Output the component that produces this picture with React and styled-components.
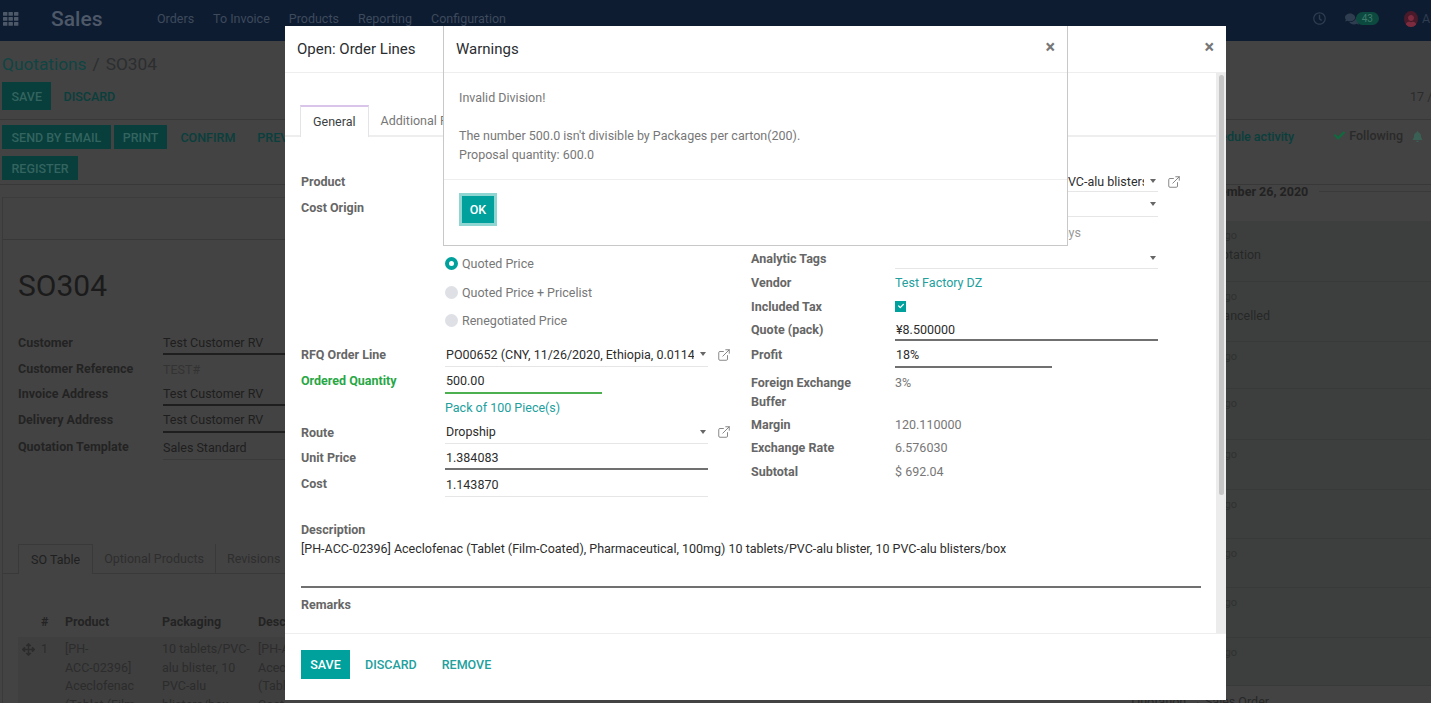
import React from 'react';
import styled, { createGlobalStyle } from 'styled-components';
import { ExternalLink } from 'lucide-react';
import { FaBell, FaCheck, FaComments, FaArrowsAlt, FaRegClock, FaUser } from 'react-icons/fa';

const GlobalStyle = createGlobalStyle`
  html, body {
    margin: 0;
    padding: 0;
    background: #434343;
  }
  * {
    box-sizing: border-box;
  }
`;

const Page = styled.div`
  position: relative;
  width: 1431px;
  height: 703px;
  overflow: hidden;
  background: #434343;
  color: #232323;
  font-family: Roboto, "Liberation Sans", sans-serif;
  font-size: 12.5px;
`;

/* ---- dimmed page behind the dialogs ---- */

const Navbar = styled.header`
  display: flex;
  align-items: center;
  height: 41px;
  padding: 0 0 4px 3px;
  background: #0e1c31;
  color: #3d4a5c;
`;

const AppsIcon = styled.svg`
  width: 16px;
  height: 14px;
  fill: #4d5868;
`;

const Brand = styled.div`
  margin-left: 32px;
  width: 106px;
  font-size: 21px;
  font-weight: 500;
  color: #4d5868;
`;

const NavMenu = styled.nav`
  display: flex;
  gap: 19px;
  flex: 1;
`;

const NavTools = styled.div`
  display: flex;
  align-items: center;
  color: #2f3d50;
`;

const ClockIcon = styled(FaRegClock)`
  margin-right: 19px;
`;

const Badge = styled.span`
  margin-left: -3px;
  margin-right: 25px;
  padding: 1px 6px;
  border-radius: 9px;
  background: #0c4a3f;
  color: #3f7a6c;
  font-size: 10px;
`;

const Avatar = styled.span`
  display: flex;
  align-items: flex-end;
  justify-content: center;
  width: 14px;
  height: 16px;
  overflow: hidden;
  border-radius: 50%;
  background: #4a1a2a;
  color: #7c2c3e;
  font-size: 12px;
`;

const UserInitial = styled.span`
  width: 9px;
  margin-left: 4px;
`;

const ControlPanel = styled.div`
  height: 79px;
  padding: 0 2px;
  border-bottom: 1px solid #383838;
`;

const Breadcrumb = styled.div`
  height: 41px;
  padding-top: 13px;
  font-size: 17.3px;
  color: #2c2e30;
`;

const CrumbLink = styled.span`
  color: #0f4543;
`;

const CrumbSeparator = styled.span`
  margin: 0 6px;
`;

const PanelRow = styled.div`
  display: flex;
  align-items: center;
  justify-content: space-between;
  gap: 13px;
`;

const DimGroup = styled.div`
  display: flex;
  align-items: center;
  align-content: flex-start;
  flex-wrap: ${(p) => (p.$wrap ? 'wrap' : 'nowrap')};
  gap: 7px ${(p) => p.$gap || 3}px;
  width: ${(p) => (p.$width ? `${p.$width}px` : 'auto')};
`;

const DimButton = styled.div`
  display: flex;
  align-items: center;
  height: ${(p) => p.$h || 24}px;
  padding: 0 ${(p) => p.$pad || 9.5}px;
  background: #083e3b;
  color: #336460;
  font-weight: 500;
  white-space: nowrap;
`;

const DimLink = styled.div`
  margin-left: ${(p) => p.$left || 0}px;
  color: #093f3d;
  font-weight: 500;
  white-space: nowrap;
`;

const Pager = styled.div`
  margin-left: auto;
  margin-right: -1px;
  width: 20px;
  color: #2b2b2b;
  white-space: nowrap;
`;

const StatusBar = styled.div`
  display: flex;
  justify-content: space-between;
  height: 65px;
  padding: 5px 8px 0 2px;
  border-bottom: 1px solid #383838;
`;

const ChatterBar = styled.div`
  display: flex;
  align-items: center;
  height: 22px;
  font-weight: 500;
  color: #2a2a2a;
`;

const ActivityLink = styled.span`
  color: #093f3d;
`;

const Following = styled.span`
  display: flex;
  align-items: center;
  gap: 4px;
  margin: -2px 0 0 40px;
  svg {
    color: #0e6b3f;
  }
`;

const BellIcon = styled(FaBell)`
  margin-left: 9px;
  color: #3a5f55;
`;

const Main = styled.div`
  display: flex;
`;

const Sheet = styled.section`
  flex: 1;
  min-width: 0;
  margin: 12px 0 0 2px;
  border-left: 1px solid #3a3a3a;
`;

const SheetHead = styled.div`
  height: 43px;
  border-top: 1px solid #3c3c3c;
  border-bottom: 1px solid #383838;
`;

const SheetBody = styled.div`
  padding: 0 0 0 15px;
`;

const DocTitle = styled.h1`
  margin: 0;
  height: 90px;
  padding-top: 28px;
  font-size: 30px;
  font-weight: 400;
  line-height: 36px;
  color: #1b1b1b;
`;

const DimRow = styled.div`
  display: grid;
  grid-template-columns: 145px 1fr;
  align-items: center;
  height: ${(p) => p.$h}px;
`;

const DimLabel = styled.div`
  font-weight: 700;
  color: #232323;
  white-space: nowrap;
`;

const DimValue = styled.div`
  height: 100%;
  display: flex;
  align-items: center;
  padding-top: 2px;
  border-bottom: ${(p) => (p.$line ? `${p.$line === 2 ? 2 : 1}px solid ${p.$line === 2 ? '#1e1e1e' : '#3a3a3a'}` : 'none')};
  color: ${(p) => (p.$muted ? '#333' : '#1e1e1e')};
  white-space: nowrap;
`;

const DimTabs = styled.div`
  display: flex;
  height: 30px;
  margin: 84px 0 0 -15px;
  padding-left: 15px;
  border-bottom: 1px solid #393939;
`;

const DimTab = styled.div`
  display: flex;
  align-items: center;
  height: ${(p) => (p.$active ? 30 : 29)}px;
  padding: 0 ${(p) => (p.$active ? 12 : 11)}px;
  border: 1px solid #393939;
  border-width: ${(p) => (p.$active ? '1px 1px 0' : '0 1px 0 0')};
  background: #434343;
  color: ${(p) => (p.$active ? '#1f1f1f' : '#2e2e2e')};
  white-space: nowrap;
`;

const Table = styled.div`
  width: 267px;
  margin-top: 39px;
  overflow: hidden;
`;

const TableRow = styled.div`
  display: grid;
  grid-template-columns: 23px 24px 97px 96px 27px;
  align-items: start;
  background: ${(p) => (p.$head ? 'transparent' : '#3f3f3f')};
  line-height: 18.5px;
  height: ${(p) => (p.$head ? '24px' : 'auto')};
  padding-top: ${(p) => (p.$head ? 0 : 3)}px;
  font-weight: ${(p) => (p.$head ? 700 : 400)};
  color: ${(p) => (p.$head ? '#232323' : '#2c2c2c')};
`;

const ClippedCell = styled.span`
  overflow: hidden;
  white-space: nowrap;
`;

const MoveIcon = styled(FaArrowsAlt)`
  margin: 3px 0 0 4px;
`;

const Chatter = styled.aside`
  width: 251px;
  flex-shrink: 0;
`;

const DateLine = styled.div`
  display: flex;
  align-items: center;
  gap: 11px;
  height: 36px;
  padding: 0 0 24px 18px;
  font-weight: 700;
  color: #222;
  white-space: nowrap;
  &::after {
    content: '';
    flex: 1;
    border-top: 1px solid #3a3a3a;
  }
`;

const ChatRow = styled.div`
  height: ${(p) => p.$h}px;
  padding-top: 8px;
  background: #3d3f3e;
  border-bottom: 1px solid #383a39;
`;

const Ago = styled.div`
  width: 57px;
  text-align: right;
  font-size: 11px;
  line-height: 14px;
  color: #2f3130;
  white-space: nowrap;
`;

const ChatText = styled.div`
  display: flex;
  justify-content: flex-end;
  margin-top: ${(p) => p.$top || 3}px;
  width: ${(p) => p.$end}px;
  line-height: 18px;
  color: #262827;
  white-space: nowrap;
`;

/* ---- dialogs ---- */

const Dialog = styled.div`
  position: absolute;
  top: 26px;
  left: ${(p) => p.$left}px;
  width: ${(p) => p.$width}px;
  height: ${(p) => p.$height}px;
  display: flex;
  flex-direction: column;
  background: #fff;
  border: ${(p) => (p.$bordered ? '1px solid #c8c8c8' : 'none')};
  border-top: none;
`;

const DialogHead = styled.div`
  display: flex;
  align-items: center;
  justify-content: space-between;
  flex-shrink: 0;
  height: 47px;
  padding: 0 ${(p) => p.$right}px 0 ${(p) => p.$left}px;
  border-bottom: 1px solid #eeeeee;
`;

const DialogTitle = styled.div`
  font-size: ${(p) => p.$size}px;
  color: #2a2d30;
`;

const CloseMark = styled.span`
  font-size: 18px;
  font-weight: 700;
  line-height: 18px;
  color: #777;
  margin-top: -5px;
`;

const DialogMiddle = styled.div`
  flex: 1;
  min-height: 0;
  display: flex;
  overflow: hidden;
`;

const DialogContent = styled.div`
  flex: 1;
  min-width: 0;
  padding-top: 32px;
`;

const ScrollTrack = styled.div`
  width: 10px;
  flex-shrink: 0;
  padding: 2px 2px 0 3px;
  background: #ececec;
`;

const ScrollThumb = styled.div`
  height: 420px;
  background: #c6c6c6;
  border-radius: 3px;
`;

const TabStrip = styled.div`
  display: flex;
  height: 32px;
  padding-left: 15px;
  border-bottom: 2px solid #eeeeee;
`;

const FormTab = styled.div`
  display: flex;
  align-items: center;
  height: ${(p) => (p.$active ? 32 : 30)}px;
  padding: 0 12px ${(p) => (p.$active ? 2 : 0)}px;
  border: ${(p) => (p.$active ? '1px solid #e3e3e8' : 'none')};
  border-top: ${(p) => (p.$active ? '2px solid #d9c4ea' : 'none')};
  border-bottom: none;
  background: #fff;
  color: ${(p) => (p.$active ? '#3c3f42' : '#777')};
  white-space: nowrap;
`;

const FormGrid = styled.div`
  display: grid;
  grid-template-columns: 450px 1fr;
  margin-top: 31px;
  padding: 0 15px 0 16px;
`;

const FormColumn = styled.div`
  display: flex;
  flex-direction: column;
  min-width: 0;
`;

const FormRow = styled.div`
  display: grid;
  grid-template-columns: 144px 1fr;
  align-items: center;
  height: ${(p) => p.$h}px;
`;

const FieldLabel = styled.div`
  font-weight: 700;
  color: ${(p) => (p.$accent ? '#28a745' : '#666666')};
  line-height: 19px;
`;

const StackedLabel = styled(FieldLabel)`
  align-self: start;
  padding-top: 5px;
`;

const FieldValue = styled.div`
  display: flex;
  align-items: center;
  height: 100%;
  color: #777;
`;

const StackedValue = styled(FieldValue)`
  align-items: flex-start;
  padding-top: 5px;
  line-height: 19px;
`;

const FieldWrap = styled.div`
  display: flex;
  align-items: center;
  gap: 9px;
  height: 100%;
`;

const InputBox = styled.div`
  display: flex;
  align-items: center;
  justify-content: space-between;
  width: ${(p) => p.$w || 263}px;
  height: 100%;
  padding: ${(p) => p.$push || (p.$select ? 0 : 2)}px ${(p) => (p.$select ? 0 : 1)}px 0 1px;
  border-bottom: ${(p) => (p.$line === 'dark' ? '2px solid #707070' : p.$line === 'green' ? '2px solid #4caf50' : '1px solid #e6e6e6')};
  color: #2d2d2d;
  white-space: nowrap;
  overflow: hidden;
`;

const InputText = styled.span`
  flex: 1;
  min-width: 0;
  overflow: hidden;
  text-overflow: clip;
`;

const Caret = styled.span`
  flex-shrink: 0;
  width: 0;
  height: 0;
  margin-left: 6px;
  margin-right: 2px;
  border-top: 4px solid #666;
  border-left: 3px solid transparent;
  border-right: 3px solid transparent;
`;

const RadioLine = styled.label`
  display: flex;
  align-items: center;
  gap: 4px;
  color: #777;
`;

const RadioDot = styled.span`
  display: block;
  width: 13px;
  height: 13px;
  border-radius: 50%;
  background: ${(p) => (p.$on ? '#fff' : '#dee0e5')};
  border: ${(p) => (p.$on ? '4px solid #00a09d' : 'none')};
`;

const CheckBox = styled.span`
  display: flex;
  align-items: center;
  justify-content: center;
  width: 11px;
  height: 11px;
  background: #00a09d;
  color: #fff;
  font-size: 6px;
`;

const TealText = styled.span`
  color: #21a09d;
`;

const HiddenEnd = styled.div`
  width: ${(p) => p.$end}px;
  text-align: right;
  color: #999;
  white-space: nowrap;
`;

const NoteBlock = styled.div`
  margin: 23px 15px 0 16px;
`;

const NoteValue = styled.div`
  height: 49px;
  padding-top: 1px;
  line-height: 18px;
  border-bottom: 2px solid #707070;
  color: #2d2d2d;
  white-space: nowrap;
`;

const NoteLabel = styled(FieldLabel)`
  height: 19px;
`;

const RemarksLabel = styled(FieldLabel)`
  margin-top: 7px;
`;

const DialogFoot = styled.div`
  display: flex;
  align-items: flex-start;
  gap: 15px;
  flex-shrink: 0;
  height: 67px;
  padding: 16px 0 0 16px;
  border-top: 1px solid #eeeeee;
`;

const PrimaryButton = styled.button`
  width: 49px;
  height: 29px;
  padding: 0;
  border: none;
  background: #00a09d;
  color: #fff;
  font: 500 12.5px Roboto, "Liberation Sans", sans-serif;
`;

const TextButton = styled.button`
  height: 29px;
  padding: 0;
  border: none;
  background: none;
  color: #21a09d;
  font: 500 12.5px Roboto, "Liberation Sans", sans-serif;
  & + & {
    margin-left: 10px;
  }
`;

const WarningBody = styled.div`
  padding: 15px 15px 15px;
  line-height: 19px;
  color: #777;
  border-bottom: 1px solid #eeeeee;
`;

const BlankLine = styled.div`
  height: 19px;
`;

const WarningFoot = styled.div`
  padding: 13px 15px;
`;

const OkButton = styled.button`
  display: block;
  width: 38px;
  height: 33px;
  padding: 0;
  border: 3px solid #8fd6d3;
  background: #00a09d;
  color: #fff;
  font: 500 12.5px Roboto, "Liberation Sans", sans-serif;
`;

const ExtIcon = styled(ExternalLink)`
  flex-shrink: 0;
  margin-top: ${(p) => p.$push || 0}px;
  color: #777;
`;

const navItems = ['Orders', 'To Invoice', 'Products', 'Reporting', 'Configuration'];

const chatRows = [
  { h: 61, text: 'Quotation', end: 81 },
  { h: 60, text: 'Order Cancelled', end: 90 },
  { h: 47 },
  { h: 51 },
  { h: 50 },
  { h: 49 },
  { h: 49 },
  { h: 50 },
  { h: 48 },
];

const Apps = () => (
  <AppsIcon viewBox="0 0 16 14">
    {[0, 5.5, 11].map((x) =>
      [0, 5, 10].map((y) => <rect key={`${x}-${y}`} x={x} y={y} width="4.4" height="3.8" rx="0.6" />)
    )}
  </AppsIcon>
);

const BackgroundPage = () => (
  <>
    <Navbar>
      <Apps />
      <Brand>Sales</Brand>
      <NavMenu>
        {navItems.map((item) => (
          <span key={item}>{item}</span>
        ))}
      </NavMenu>
      <NavTools>
        <ClockIcon size={13} />
        <FaComments size={14} />
        <Badge>43</Badge>
        <Avatar>
          <FaUser />
        </Avatar>
        <UserInitial>A</UserInitial>
      </NavTools>
    </Navbar>

    <ControlPanel>
      <Breadcrumb>
        <CrumbLink>Quotations</CrumbLink>
        <CrumbSeparator>/</CrumbSeparator>
        SO304
      </Breadcrumb>
      <PanelRow>
        <DimGroup $gap={12}>
          <DimButton $h={28}>SAVE</DimButton>
          <DimLink>DISCARD</DimLink>
        </DimGroup>
        <Pager>17 /</Pager>
      </PanelRow>
    </ControlPanel>

    <StatusBar>
      <DimGroup $wrap $width={330}>
        <DimButton>SEND BY EMAIL</DimButton>
        <DimButton $pad={9}>PRINT</DimButton>
        <DimLink $left={10}>CONFIRM</DimLink>
        <DimLink $left={19}>PREVIEW</DimLink>
        <DimButton>REGISTER</DimButton>
      </DimGroup>
      <ChatterBar>
        <ActivityLink>Schedule activity</ActivityLink>
        <Following>
          <FaCheck size={11} /> Following
        </Following>
        <BellIcon size={11} />
      </ChatterBar>
    </StatusBar>

    <Main>
      <Sheet>
        <SheetHead />
        <SheetBody>
          <DocTitle>SO304</DocTitle>
          <DimRow $h={25}>
            <DimLabel>Customer</DimLabel>
            <DimValue $line={2}>Test Customer RV</DimValue>
          </DimRow>
          <DimRow $h={26}>
            <DimLabel>Customer Reference</DimLabel>
            <DimValue $muted>TEST#</DimValue>
          </DimRow>
          <DimRow $h={25}>
            <DimLabel>Invoice Address</DimLabel>
            <DimValue $line={2}>Test Customer RV</DimValue>
          </DimRow>
          <DimRow $h={27}>
            <DimLabel>Delivery Address</DimLabel>
            <DimValue $line={2}>Test Customer RV</DimValue>
          </DimRow>
          <DimRow $h={27}>
            <DimLabel>Quotation Template</DimLabel>
            <DimValue $line={1}>Sales Standard</DimValue>
          </DimRow>
          <DimTabs>
            <DimTab $active>SO Table</DimTab>
            <DimTab>Optional Products</DimTab>
            <DimTab>Revisions</DimTab>
          </DimTabs>
          <Table>
            <TableRow $head>
              <span />
              <span>#</span>
              <span>Product</span>
              <span>Packaging</span>
              <ClippedCell>Description</ClippedCell>
            </TableRow>
            <TableRow>
              <MoveIcon size={13} />
              <span>1</span>
              <span>
                [PH-
                <br />
                ACC-02396]
                <br />
                Aceclofenac
                <br />
                (Tablet (Film-
              </span>
              <span>
                10 tablets/PVC-
                <br />
                alu blister, 10
                <br />
                PVC-alu
                <br />
                blisters/box
              </span>
              <ClippedCell>
                [PH-ACC-
                <br />
                Aceclofenac
                <br />
                (Tablet (Film-
                <br />
                Coated)
              </ClippedCell>
            </TableRow>
          </Table>
        </SheetBody>
      </Sheet>
      <Chatter>
        <DateLine>
          <span>November 26, 2020</span>
        </DateLine>
        {chatRows.map((row, i) => (
          <ChatRow key={i} $h={row.h}>
            <Ago>2 days ago</Ago>
            {row.text && <ChatText $end={row.end}>{row.text}</ChatText>}
          </ChatRow>
        ))}
        <ChatText $top={7} $end={89}>
          Quotation → Sales Order
        </ChatText>
      </Chatter>
    </Main>
  </>
);

const Select = ({ text, w, push, link = true }) => (
  <FieldWrap>
    <InputBox $select $w={w} $push={push}>
      <InputText>{text}</InputText>
      <Caret />
    </InputBox>
    {link && <ExtIcon size={14} strokeWidth={1.5} $push={push} />}
  </FieldWrap>
);

const Radio = ({ on, h, children }) => (
  <FormRow $h={h}>
    <span />
    <RadioLine>
      <RadioDot $on={on} />
      {children}
    </RadioLine>
  </FormRow>
);

const OrderLineDialog = () => (
  <Dialog $left={285} $width={941} $height={674}>
    <DialogHead $left={12} $right={12}>
      <DialogTitle $size={15}>Open: Order Lines</DialogTitle>
      <CloseMark>×</CloseMark>
    </DialogHead>
    <DialogMiddle>
      <DialogContent>
        <TabStrip>
          <FormTab $active>General</FormTab>
          <FormTab>Additional Purchase</FormTab>
        </TabStrip>
        <FormGrid>
          <FormColumn>
            <FormRow $h={26}>
              <FieldLabel>Product</FieldLabel>
            </FormRow>
            <FormRow $h={26}>
              <FieldLabel>Cost Origin</FieldLabel>
            </FormRow>
            <FormRow $h={29} />
            <Radio on h={29}>
              Quoted Price
            </Radio>
            <Radio h={29}>Quoted Price + Pricelist</Radio>
            <Radio h={27}>Renegotiated Price</Radio>
            <FormRow $h={8} />
            <FormRow $h={25}>
              <FieldLabel>RFQ Order Line</FieldLabel>
              <Select text="PO00652 (CNY, 11/26/2020, Ethiopia, 0.0114 USD)" />
            </FormRow>
            <FormRow $h={27}>
              <FieldLabel $accent>Ordered Quantity</FieldLabel>
              <InputBox $w={157} $line="green">
                500.00
              </InputBox>
            </FormRow>
            <FormRow $h={26}>
              <span />
              <TealText>Pack of 100 Piece(s)</TealText>
            </FormRow>
            <FormRow $h={24}>
              <FieldLabel>Route</FieldLabel>
              <Select text="Dropship" />
            </FormRow>
            <FormRow $h={26}>
              <FieldLabel>Unit Price</FieldLabel>
              <InputBox $line="dark">1.384083</InputBox>
            </FormRow>
            <FormRow $h={27}>
              <FieldLabel>Cost</FieldLabel>
              <InputBox>1.143870</InputBox>
            </FormRow>
          </FormColumn>
          <FormColumn>
            <FormRow $h={24}>
              <span />
              <Select text="10 tablets/PVC-alu blister, 10 PVC-alu blisters/box" push={3} />
            </FormRow>
            <FormRow $h={25}>
              <span />
              <Select text="" link={false} />
            </FormRow>
            <FormRow $h={30}>
              <span />
              <HiddenEnd $end={186}>Delivery lead time: 30 days</HiddenEnd>
            </FormRow>
            <FormRow $h={22}>
              <FieldLabel>Analytic Tags</FieldLabel>
              <Select text="" link={false} />
            </FormRow>
            <FormRow $h={26}>
              <FieldLabel>Vendor</FieldLabel>
              <TealText>Test Factory DZ</TealText>
            </FormRow>
            <FormRow $h={22}>
              <FieldLabel>Included Tax</FieldLabel>
              <CheckBox>
                <FaCheck />
              </CheckBox>
            </FormRow>
            <FormRow $h={24}>
              <FieldLabel>Quote (pack)</FieldLabel>
              <InputBox $line="dark">¥8.500000</InputBox>
            </FormRow>
            <FormRow $h={27}>
              <FieldLabel>Profit</FieldLabel>
              <InputBox $w={157} $line="dark">
                18%
              </InputBox>
            </FormRow>
            <FormRow $h={45}>
              <StackedLabel>
                Foreign Exchange
                <br />
                Buffer
              </StackedLabel>
              <StackedValue>3%</StackedValue>
            </FormRow>
            <FormRow $h={23}>
              <FieldLabel>Margin</FieldLabel>
              <FieldValue>120.110000</FieldValue>
            </FormRow>
            <FormRow $h={23}>
              <FieldLabel>Exchange Rate</FieldLabel>
              <FieldValue>6.576030</FieldValue>
            </FormRow>
            <FormRow $h={25}>
              <FieldLabel>Subtotal</FieldLabel>
              <FieldValue>$ 692.04</FieldValue>
            </FormRow>
          </FormColumn>
        </FormGrid>
        <NoteBlock>
          <NoteLabel>Description</NoteLabel>
          <NoteValue>
            [PH-ACC-02396] Aceclofenac (Tablet (Film-Coated), Pharmaceutical, 100mg) 10 tablets/PVC-alu blister, 10 PVC-alu blisters/box
          </NoteValue>
          <RemarksLabel>Remarks</RemarksLabel>
        </NoteBlock>
      </DialogContent>
      <ScrollTrack>
        <ScrollThumb />
      </ScrollTrack>
    </DialogMiddle>
    <DialogFoot>
      <PrimaryButton>SAVE</PrimaryButton>
      <TextButton>DISCARD</TextButton>
      <TextButton>REMOVE</TextButton>
    </DialogFoot>
  </Dialog>
);

const WarningDialog = () => (
  <Dialog $left={443} $width={625} $height={220} $bordered>
    <DialogHead $left={12} $right={12}>
      <DialogTitle $size={15}>Warnings</DialogTitle>
      <CloseMark>×</CloseMark>
    </DialogHead>
    <WarningBody>
      Invalid Division!
      <BlankLine />
      The number 500.0 isn't divisible by Packages per carton(200).
      <br />
      Proposal quantity: 600.0
    </WarningBody>
    <WarningFoot>
      <OkButton>OK</OkButton>
    </WarningFoot>
  </Dialog>
);

const App = () => (
  <Page>
    <GlobalStyle />
    <BackgroundPage />
    <OrderLineDialog />
    <WarningDialog />
  </Page>
);

export default App;
